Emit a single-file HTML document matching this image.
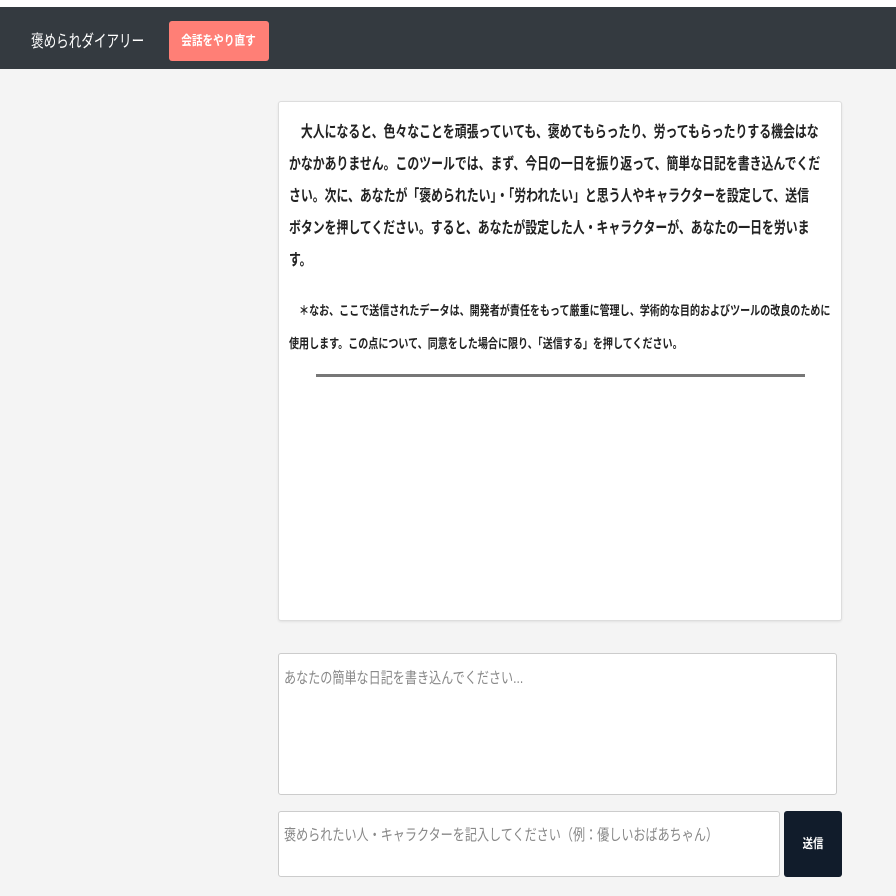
<!DOCTYPE html>
<html><head><meta charset="utf-8"><style>
*{box-sizing:border-box;margin:0;padding:0}
body{width:896px;height:896px;background:#f4f4f4;font-family:"Liberation Sans","Noto Sans CJK JP",sans-serif;position:relative;overflow:hidden}
.s{display:block;white-space:nowrap;transform-origin:0 50%}
.top{position:absolute;left:0;top:0;width:896px;height:7px;background:#fff}
.nav{position:absolute;left:0;top:7px;width:896px;height:62px;background:#343a40}
.brand{position:absolute;left:31px;top:20px;color:#fff;font-size:17px;transform:scaleX(.74);transform-origin:0 50%;white-space:nowrap}
.reset{position:absolute;left:169px;top:14px;width:100px;height:40px;background:#ff7f76;border-radius:3px;color:#fff;font-weight:bold;font-size:13px;line-height:40px;text-align:center;white-space:nowrap}
.reset span{display:inline-block;transform:scaleX(.82)}
.card{position:absolute;left:278px;top:101px;width:564px;height:520px;background:#fff;border:1px solid #ddd;border-radius:3px;box-shadow:0 1px 2px rgba(0,0,0,.08)}
.p1{position:absolute;left:10px;top:15px;font-size:16px;font-weight:bold;line-height:32px;color:#222}
.p1 .s{transform:scaleX(.742)}
.p2{position:absolute;left:10px;top:192px;font-size:13px;font-weight:bold;line-height:33px;color:#222}
.p2 .s{transform:scaleX(.772)}
.hr{position:absolute;left:37px;top:272px;width:489px;height:3px;background:#777}
.ta{position:absolute;left:278px;top:653px;width:559px;height:142px;background:#fff;border:1px solid #ccc;border-radius:3px;color:#888;font-size:15.5px;padding:12px 5px}
.ta2{position:absolute;left:278px;top:811px;width:502px;height:66px;background:#fff;border:1px solid #ccc;border-radius:3px;color:#888;font-size:15.5px;padding:11px 5px}
.ta .s,.ta2 .s{transform:scaleX(.78)}
.send{position:absolute;left:784px;top:811px;width:58px;height:66px;background:#111c2b;border-radius:3px;color:#fff;font-weight:bold;font-size:13px;line-height:66px;text-align:center}
.send span{display:inline-block;transform:scaleX(.8)}
</style></head><body>
<div class="top"></div>
<div class="nav"><div class="brand">褒められダイアリー</div><div class="reset"><span>会話をやり直す</span></div></div>
<div class="card">
<div class="p1">
<span class="s">　大人になると、色々なことを頑張っていても、褒めてもらったり、労ってもらったりする機会はな</span>
<span class="s">かなかありません。このツールでは、まず、今日の一日を振り返って、簡単な日記を書き込んでくだ</span>
<span class="s">さい。次に、あなたが「褒められたい」・「労われたい」と思う人やキャラクターを設定して、送信</span>
<span class="s">ボタンを押してください。すると、あなたが設定した人・キャラクターが、あなたの一日を労いま</span>
<span class="s">す。</span>
</div>
<div class="p2">
<span class="s">　＊なお、ここで送信されたデータは、開発者が責任をもって厳重に管理し、学術的な目的およびツールの改良のために</span>
<span class="s">使用します。この点について、同意をした場合に限り、「送信する」を押してください。</span>
</div>
<div class="hr"></div>
</div>
<div class="ta"><span class="s">あなたの簡単な日記を書き込んでください...</span></div>
<div class="ta2"><span class="s">褒められたい人・キャラクターを記入してください（例：優しいおばあちゃん）</span></div>
<div class="send"><span>送信</span></div>
</body></html>
